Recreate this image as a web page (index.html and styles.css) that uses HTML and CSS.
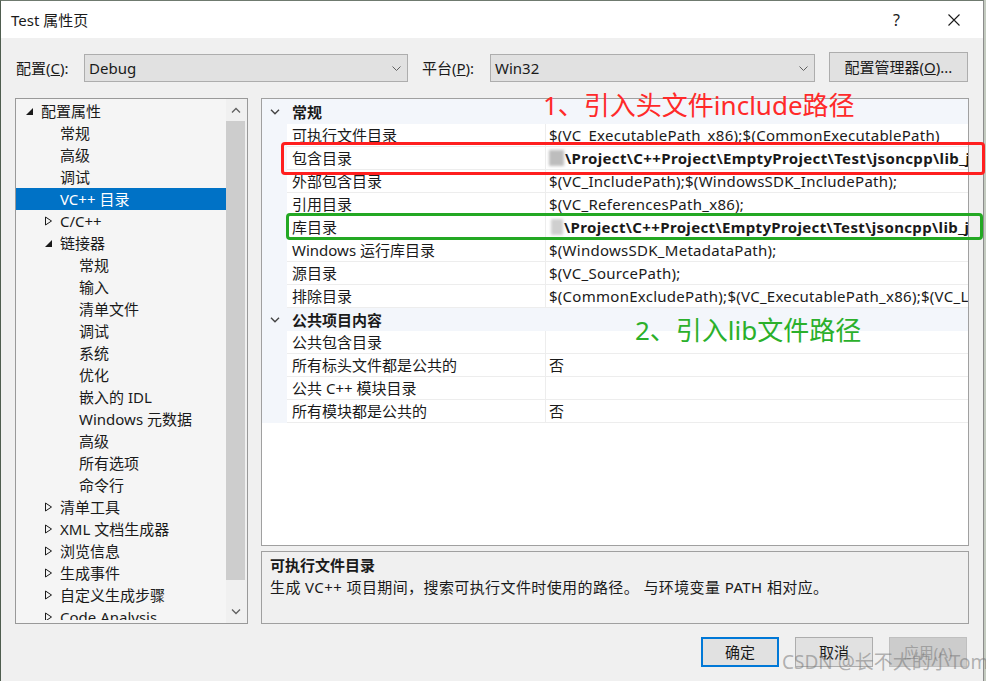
FILE: index.html
```html
<!DOCTYPE html>
<html lang="zh-CN">
<head>
<meta charset="utf-8">
<title>Test 属性页</title>
<link rel="stylesheet" href="styles.css">
</head>
<body>
<div class="window">
  <div class="titlebar">
    <span class="title">Test 属性页</span>
    <div class="caption">
      <span class="help">?</span>
      <svg class="close" width="12" height="12" viewBox="0 0 12 12"><path d="M0.5 0.5 L11.5 11.5 M11.5 0.5 L0.5 11.5" stroke="#1a1a1a" stroke-width="1.1" fill="none"/></svg>
    </div>
  </div>

  <div class="content">
    <div class="config-row">
      <span class="lbl lbl-config">配置(<u>C</u>):</span>
      <div class="combo combo-config">
        <span>Debug</span>
        <svg class="chev" width="9" height="5" viewBox="0 0 9 5"><polyline points="0.5,0.5 4.5,4.5 8.5,0.5" fill="none" stroke="#606060" stroke-width="1"/></svg>
      </div>
      <span class="lbl lbl-platform">平台(<u>P</u>):</span>
      <div class="combo combo-platform">
        <span>Win32</span>
        <svg class="chev" width="9" height="5" viewBox="0 0 9 5"><polyline points="0.5,0.5 4.5,4.5 8.5,0.5" fill="none" stroke="#606060" stroke-width="1"/></svg>
      </div>
      <button class="btn btn-manager">配置管理器(<u>O</u>)...</button>
    </div>

    <div class="main">
      <div class="tree">
        <div class="tree-list">
          <div class="node l0"><span class="twisty"><svg width="9" height="9" viewBox="0 0 9 9"><polygon points="8,1 8,8 1,8" fill="#1a1a1a"/></svg></span><span>配置属性</span></div>
          <div class="node l1"><span class="twisty"></span><span>常规</span></div>
          <div class="node l1"><span class="twisty"></span><span>高级</span></div>
          <div class="node l1"><span class="twisty"></span><span>调试</span></div>
          <div class="node l1 selected"><span class="twisty"></span><span>VC++ 目录</span></div>
          <div class="node l1"><span class="twisty"><svg width="9" height="10" viewBox="0 0 9 10"><polygon points="1.5,1 7.5,5 1.5,9" fill="none" stroke="#1a1a1a" stroke-width="1"/></svg></span><span>C/C++</span></div>
          <div class="node l1"><span class="twisty"><svg width="9" height="9" viewBox="0 0 9 9"><polygon points="8,1 8,8 1,8" fill="#1a1a1a"/></svg></span><span>链接器</span></div>
          <div class="node l2"><span class="twisty"></span><span>常规</span></div>
          <div class="node l2"><span class="twisty"></span><span>输入</span></div>
          <div class="node l2"><span class="twisty"></span><span>清单文件</span></div>
          <div class="node l2"><span class="twisty"></span><span>调试</span></div>
          <div class="node l2"><span class="twisty"></span><span>系统</span></div>
          <div class="node l2"><span class="twisty"></span><span>优化</span></div>
          <div class="node l2"><span class="twisty"></span><span>嵌入的 IDL</span></div>
          <div class="node l2"><span class="twisty"></span><span>Windows 元数据</span></div>
          <div class="node l2"><span class="twisty"></span><span>高级</span></div>
          <div class="node l2"><span class="twisty"></span><span>所有选项</span></div>
          <div class="node l2"><span class="twisty"></span><span>命令行</span></div>
          <div class="node l1"><span class="twisty"><svg width="9" height="10" viewBox="0 0 9 10"><polygon points="1.5,1 7.5,5 1.5,9" fill="none" stroke="#1a1a1a" stroke-width="1"/></svg></span><span>清单工具</span></div>
          <div class="node l1"><span class="twisty"><svg width="9" height="10" viewBox="0 0 9 10"><polygon points="1.5,1 7.5,5 1.5,9" fill="none" stroke="#1a1a1a" stroke-width="1"/></svg></span><span>XML 文档生成器</span></div>
          <div class="node l1"><span class="twisty"><svg width="9" height="10" viewBox="0 0 9 10"><polygon points="1.5,1 7.5,5 1.5,9" fill="none" stroke="#1a1a1a" stroke-width="1"/></svg></span><span>浏览信息</span></div>
          <div class="node l1"><span class="twisty"><svg width="9" height="10" viewBox="0 0 9 10"><polygon points="1.5,1 7.5,5 1.5,9" fill="none" stroke="#1a1a1a" stroke-width="1"/></svg></span><span>生成事件</span></div>
          <div class="node l1"><span class="twisty"><svg width="9" height="10" viewBox="0 0 9 10"><polygon points="1.5,1 7.5,5 1.5,9" fill="none" stroke="#1a1a1a" stroke-width="1"/></svg></span><span>自定义生成步骤</span></div>
          <div class="node l1"><span class="twisty"><svg width="9" height="10" viewBox="0 0 9 10"><polygon points="1.5,1 7.5,5 1.5,9" fill="none" stroke="#1a1a1a" stroke-width="1"/></svg></span><span>Code Analysis</span></div>
        </div>
        <div class="vscroll">
          <div class="sb-arrow"><svg width="10" height="6" viewBox="0 0 10 6"><polyline points="1,5.5 5,1.5 9,5.5" fill="none" stroke="#606060" stroke-width="1.3"/></svg></div>
          <div class="sb-track"><div class="sb-thumb"></div></div>
          <div class="sb-arrow"><svg width="10" height="6" viewBox="0 0 10 6"><polyline points="1,0.5 5,4.5 9,0.5" fill="none" stroke="#606060" stroke-width="1.3"/></svg></div>
        </div>
      </div>

      <div class="right">
        <div class="grid">
          <div class="cat cat-first">
            <span class="gut"><svg width="10" height="6" viewBox="0 0 10 6"><polyline points="1,0.8 5,4.8 9,0.8" fill="none" stroke="#444" stroke-width="1.4"/></svg></span>
            <span class="cat-name">常规</span>
          </div>
          <div class="prop"><span class="gut"></span><span class="name">可执行文件目录</span><span class="val">$(VC_ExecutablePath_x86);$(CommonExecutablePath)</span></div>
          <div class="prop"><span class="gut"></span><span class="name">包含目录</span><span class="val bold"><span class="blur"></span>\Project\C++Project\EmptyProject\Test\jsoncpp\lib_json</span></div>
          <div class="prop"><span class="gut"></span><span class="name">外部包含目录</span><span class="val">$(VC_IncludePath);$(WindowsSDK_IncludePath);</span></div>
          <div class="prop"><span class="gut"></span><span class="name">引用目录</span><span class="val">$(VC_ReferencesPath_x86);</span></div>
          <div class="prop"><span class="gut"></span><span class="name">库目录</span><span class="val bold"><span class="blur blur-light"></span>\Project\C++Project\EmptyProject\Test\jsoncpp\lib_json</span></div>
          <div class="prop"><span class="gut"></span><span class="name">Windows 运行库目录</span><span class="val">$(WindowsSDK_MetadataPath);</span></div>
          <div class="prop"><span class="gut"></span><span class="name">源目录</span><span class="val">$(VC_SourcePath);</span></div>
          <div class="prop"><span class="gut"></span><span class="name">排除目录</span><span class="val">$(CommonExcludePath);$(VC_ExecutablePath_x86);$(VC_LibraryPath_x86)</span></div>
          <div class="cat">
            <span class="gut"><svg width="10" height="6" viewBox="0 0 10 6"><polyline points="1,0.8 5,4.8 9,0.8" fill="none" stroke="#444" stroke-width="1.4"/></svg></span>
            <span class="cat-name">公共项目内容</span>
          </div>
          <div class="prop"><span class="gut"></span><span class="name">公共包含目录</span><span class="val"></span></div>
          <div class="prop"><span class="gut"></span><span class="name">所有标头文件都是公共的</span><span class="val">否</span></div>
          <div class="prop"><span class="gut"></span><span class="name">公共 C++ 模块目录</span><span class="val"></span></div>
          <div class="prop"><span class="gut"></span><span class="name">所有模块都是公共的</span><span class="val">否</span></div>
        </div>
        <div class="desc">
          <div class="desc-title">可执行文件目录</div>
          <div class="desc-text">生成 VC++ 项目期间，搜索可执行文件时使用的路径。 与环境变量 PATH 相对应。</div>
        </div>
      </div>
    </div>

    <div class="footer">
      <button class="btn btn-ok">确定</button>
      <button class="btn">取消</button>
      <button class="btn btn-disabled">应用(A)</button>
    </div>
  </div>

  <div class="mark-box mark-red"></div>
  <div class="mark-box mark-green"></div>
  <div class="anno anno-red">1、引入头文件include路径</div>
  <div class="anno anno-green">2、引入lib文件路径</div>
  <div class="watermark">CSDN @长不大的小Tom</div>
</div>
</body>
</html>
```

FILE: styles.css
```css
* { box-sizing: border-box; }

html, body {
  margin: 0;
  padding: 0;
}

body {
  width: 986px;
  height: 681px;
  overflow: hidden;
  background: #c4cbc0;
  font-family: "Noto Sans", "Noto Sans CJK SC", sans-serif;
  font-size: 15px;
  color: #1a1a1a;
}

.window {
  position: relative;
  width: 984px;
  height: 681px;
  background: #f0f0f0;
  border-top: 1px solid #6f7a6f;
  border-left: 1px solid #4f5d4f;
  border-right: 1px solid #8c8c8c;
}

/* title bar */
.titlebar {
  height: 37px;
  background: #ffffff;
  display: flex;
  align-items: center;
  padding-left: 10px;
}

.title {
  font-size: 15px;
  line-height: 20px;
}

.caption {
  margin-left: auto;
  display: flex;
  align-items: center;
}

.help {
  width: 9px;
  font-size: 16px;
  line-height: 20px;
  margin-right: 46px;
}

.close {
  margin-right: 23px;
}

/* content */
.content {
  padding: 0 14px;
}

.config-row {
  margin-top: 14px;
  height: 30px;
  display: flex;
  align-items: flex-end;
}

.lbl {
  height: 28px;
  line-height: 28px;
  white-space: nowrap;
}

.lbl-config {
  width: 69px;
  padding-left: 1px;
}

.lbl-platform {
  width: 68px;
  margin-left: 14px;
}

.combo {
  height: 28px;
  border: 1px solid #adadad;
  background: #e1e1e1;
  display: flex;
  align-items: center;
  padding-left: 4px;
  line-height: 26px;
}

.combo .chev {
  margin-left: auto;
  margin-right: 6px;
}

.combo-config { width: 324px; }
.combo-platform { width: 325px; }

.btn {
  font-family: "Noto Sans", "Noto Sans CJK SC", sans-serif;
  font-size: 15px;
  color: #1a1a1a;
  background: #e1e1e1;
  border: 1px solid #adadad;
  padding: 0;
  height: 30px;
  width: 78px;
  line-height: 26px;
}

.btn-manager {
  margin-left: 14px;
  width: 139px;
}

/* main area */
.main {
  margin-top: 16px;
  height: 526px;
  display: flex;
  gap: 13px;
}

.tree {
  width: 233px;
  border: 1px solid #999999;
  background: #f5f5f5;
  display: flex;
  overflow: hidden;
}

.tree-list {
  flex: 1;
  padding-top: 1px;
  margin-bottom: 3px;
  overflow: hidden;
}

.node {
  height: 22px;
  line-height: 22px;
  display: flex;
  align-items: center;
  white-space: nowrap;
}

.node.l0 { padding-left: 9px; }
.node.l1 { padding-left: 28px; }
.node.l2 { padding-left: 47px; }

.twisty {
  width: 16px;
  flex: none;
  display: flex;
  align-items: center;
}

.node.selected {
  background: #0072c6;
  color: #ffffff;
}

.vscroll {
  width: 21px;
  flex: none;
  background: #f0f0f0;
  display: flex;
  flex-direction: column;
}

.sb-arrow {
  height: 22px;
  display: flex;
  align-items: center;
  justify-content: center;
  padding-right: 2px;
}

.sb-track {
  flex: 1;
}

.sb-thumb {
  height: 459px;
  margin-right: 2px;
  background: #cdcdcd;
}

.right {
  width: 708px;
  display: flex;
  flex-direction: column;
  gap: 5px;
}

.grid {
  height: 448px;
  border: 1px solid #a0a0a0;
  background: #ffffff;
  overflow: hidden;
}

.cat {
  height: 23px;
  background: #f3f6fb;
  display: flex;
  align-items: center;
}

.cat-first {
  height: 25px;
}

.gut {
  width: 25px;
  flex: none;
  align-self: stretch;
  background: #f3f6fb;
  display: flex;
  align-items: center;
  padding-left: 8px;
}

.cat-name {
  font-weight: bold;
  padding-left: 5px;
  line-height: 22px;
}

.prop {
  height: 23px;
  display: flex;
  white-space: nowrap;
}

.name {
  width: 259px;
  flex: none;
  padding-left: 5px;
  line-height: 22px;
  border-right: 1px solid #ededed;
  border-bottom: 1px solid #ededed;
  overflow: hidden;
}

.val {
  flex: 1;
  padding-left: 3px;
  line-height: 22px;
  letter-spacing: 0.27px;
  border-bottom: 1px solid #ededed;
  overflow: hidden;
  display: flex;
  align-items: center;
}

.val.bold {
  font-weight: bold;
  letter-spacing: 0.35px;
}

.blur {
  width: 15px;
  height: 16px;
  flex: none;
  margin-right: 1px;
  background: #bdbdbd;
  filter: blur(1.5px);
}

.blur-light {
  width: 12px;
  margin-left: 2px;
  background: #cfcfcf;
}

.desc {
  height: 73px;
  border: 1px solid #a0a0a0;
  background: #f0f0f0;
  padding: 2px 8px;
  line-height: 22px;
}

.desc-title {
  font-weight: bold;
}

.desc-text {
  letter-spacing: 0.4px;
}

/* footer */
.footer {
  margin-top: 13px;
  display: flex;
  justify-content: flex-end;
  gap: 16px;
  padding-right: 2px;
}

.btn-ok {
  border: 2px solid #0078d7;
}

.btn-disabled {
  background: #cccccc;
  border-color: #bfbfbf;
  color: #a0a0a0;
}

/* overlays */
.mark-box {
  position: absolute;
  border-radius: 4px;
  pointer-events: none;
}

.mark-red {
  left: 280px;
  top: 141px;
  width: 704px;
  height: 33px;
  border: 3px solid #ff1f1f;
}

.mark-green {
  left: 285px;
  top: 212px;
  width: 697px;
  height: 27px;
  border: 3px solid #23a823;
}

.anno {
  position: absolute;
  font-family: "Noto Sans", "Noto Sans CJK SC", sans-serif;
  font-size: 26px;
  line-height: 26px;
  white-space: nowrap;
}

.anno-red {
  left: 542px;
  top: 91px;
  color: #ff2a2a;
}

.anno-green {
  left: 634px;
  top: 316px;
  color: #2bb02b;
}

.watermark {
  position: absolute;
  left: 781px;
  top: 650px;
  font-size: 19px;
  line-height: 22px;
  color: rgba(120, 120, 120, 0.55);
  white-space: nowrap;
}
```
